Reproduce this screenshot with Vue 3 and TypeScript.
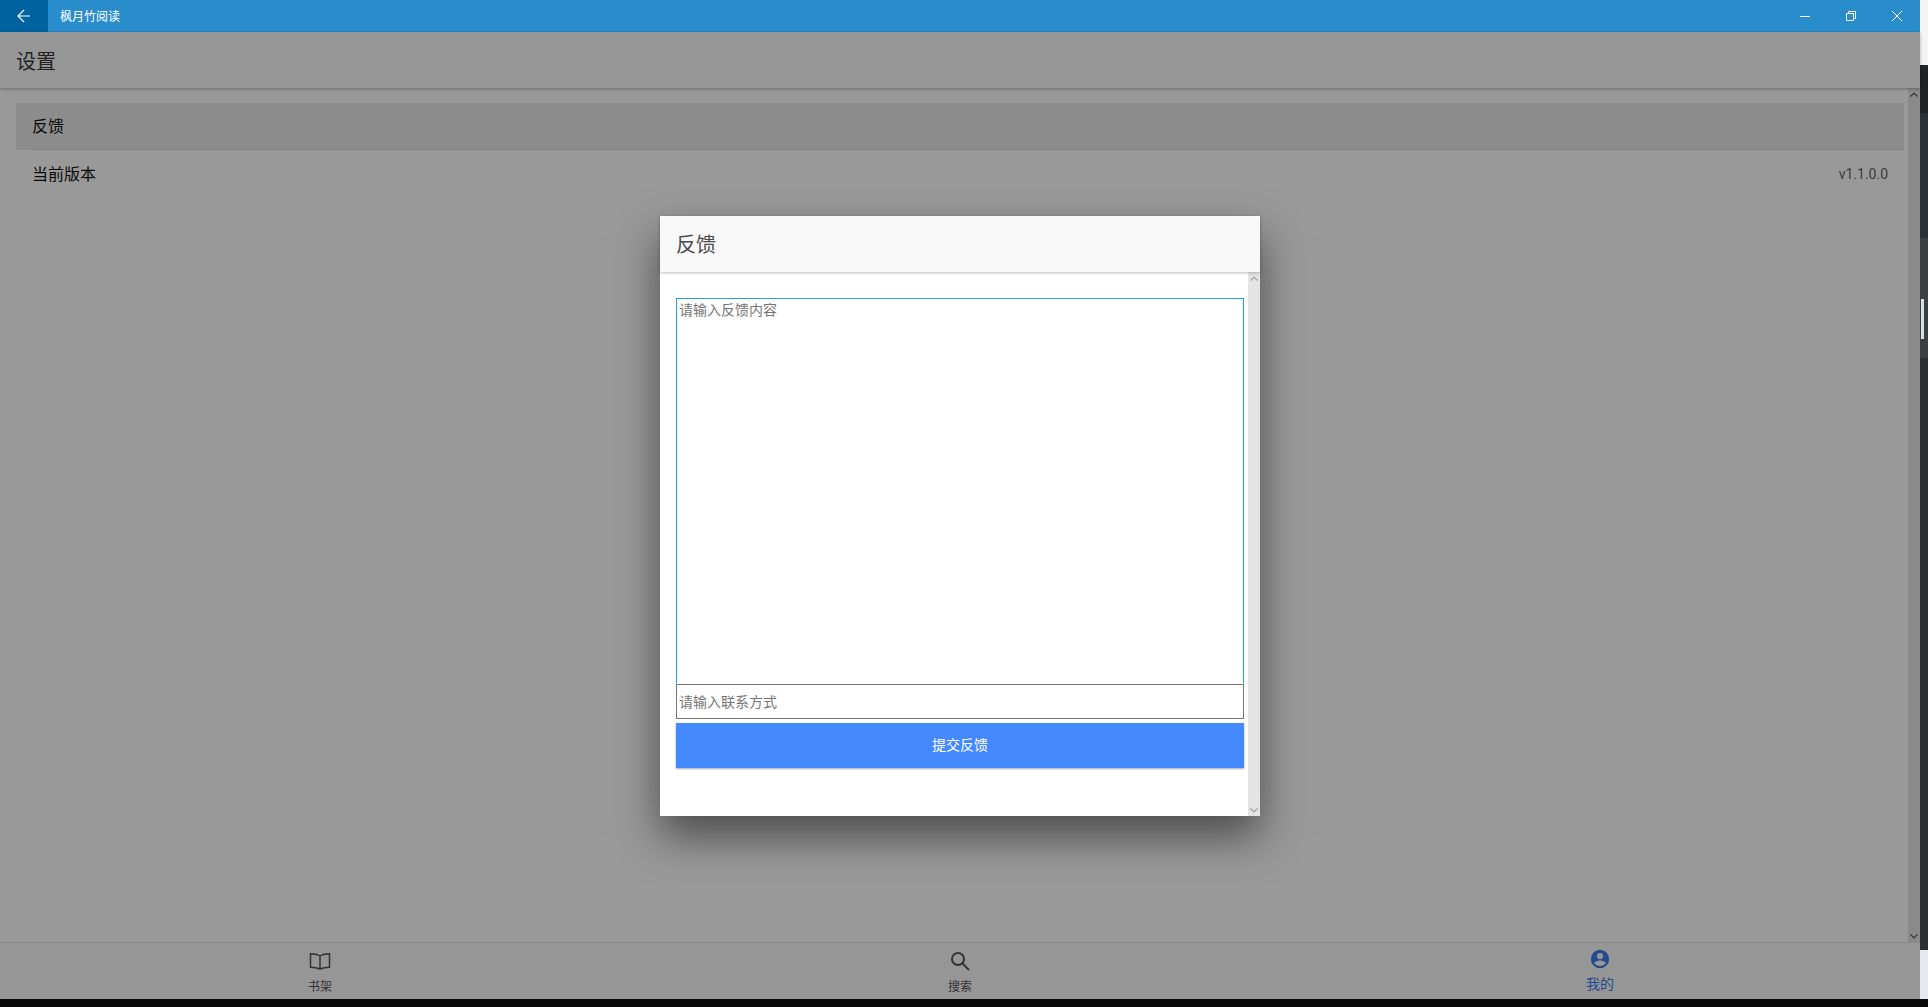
<script setup lang="ts">
interface Tab { label: string; active?: boolean; icon: string }
const tabs: Tab[] = [
  { label: '书架', icon: 'book' },
  { label: '搜索', icon: 'search' },
  { label: '我的', icon: 'user', active: true },
]
</script>

<template>
  <div class="screen">
    <div class="main">
      <div class="window">
        <header class="titlebar">
          <button class="back" aria-label="back">
            <svg width="16" height="16" viewBox="0 0 16 16" fill="none" stroke="#fff" stroke-width="1.2">
              <path d="M14 8H2.2M8 2L2 8l6 6" />
            </svg>
          </button>
          <span class="app-name">枫月竹阅读</span>
          <div class="controls">
            <span class="ctl">
              <svg width="10" height="10" viewBox="0 0 10 10" fill="none" stroke="#fff"><path d="M0 5.500h10" /></svg>
            </span>
            <span class="ctl">
              <svg width="10" height="10" viewBox="0 0 10 10" fill="none" stroke="#fff"><path d="M.5 2.500h7v7h-7zM2.500 2.500v-2h7v7h-2" /></svg>
            </span>
            <span class="ctl">
              <svg width="10" height="10" viewBox="0 0 10 10" fill="none" stroke="#fff"><path d="M0 0l10 10M10 0L0 10" /></svg>
            </span>
          </div>
        </header>

        <div class="content">
          <div class="page-head">设置</div>
          <div class="middle">
            <div class="list">
              <div class="row selected"><span class="row-in">反馈</span></div>
              <div class="row"><span>当前版本</span><span class="version">v1.1.0.0</span></div>
            </div>
            <div class="scroll">
              <svg width="8" height="5" viewBox="0 0 8 5" fill="none" stroke="#555" stroke-width="1.2"><path d="M.5 4.500L4 1l3.500 3.500" /></svg>
              <svg width="8" height="5" viewBox="0 0 8 5" fill="none" stroke="#555" stroke-width="1.2"><path d="M.5.5L4 4 7.500.5" /></svg>
            </div>
          </div>
          <nav class="tabs">
            <div v-for="t in tabs" :key="t.label" class="tab" :class="{ active: t.active }">
              <svg v-if="t.icon === 'book'" width="22" height="22" viewBox="0 0 22 22" fill="none" stroke="currentColor" stroke-width="1.500">
                <path d="M11 6C9 4.600 5 4 1.500 3.800v13.400c3.500.2 7.500.8 9.500 2 2-1.200 6-1.800 9.500-2V3.800C17 4 13 4.600 11 6zM11 6v13" />
              </svg>
              <svg v-else-if="t.icon === 'search'" width="22" height="22" viewBox="0 0 22 22" fill="none" stroke="currentColor" stroke-width="2">
                <circle cx="9" cy="9" r="6" /><path d="M13.500 13.500l6.500 6.500" />
              </svg>
              <svg v-else width="22" height="22" viewBox="0 0 24 24" fill="currentColor">
                <path d="M12 2a10 10 0 100 20 10 10 0 000-20zm0 3.400a3.400 3.400 0 110 6.800 3.400 3.400 0 010-6.800zm0 14.400a7.800 7.800 0 01-6.300-3.200c.1-2 4.200-3.100 6.300-3.100s6.200 1.100 6.300 3.100a7.800 7.800 0 01-6.300 3.200z" />
              </svg>
              <span class="tab-label">{{ t.label }}</span>
            </div>
          </nav>

          <div class="overlay">
            <section class="dialog">
              <h2 class="dialog-head">反馈</h2>
              <div class="dialog-body">
                <div class="form">
                  <textarea class="area" placeholder="请输入反馈内容"></textarea>
                  <input class="contact" placeholder="请输入联系方式" />
                  <button class="submit">提交反馈</button>
                </div>
                <div class="dialog-scroll">
                  <svg width="8" height="5" viewBox="0 0 8 5" fill="none" stroke="#a0a0a0" stroke-width="1.2"><path d="M.5 4.500L4 1l3.500 3.500" /></svg>
                  <svg width="8" height="5" viewBox="0 0 8 5" fill="none" stroke="#a0a0a0" stroke-width="1.2"><path d="M.5.5L4 4 7.500.5" /></svg>
                </div>
              </div>
            </section>
          </div>
        </div>
      </div>
      <aside class="desktop">
        <div class="d-top"></div>
        <div class="d-dark1"></div>
        <div class="d-dark2"></div>
        <div class="d-dark3"><i class="d-thumb"></i></div>
        <div class="d-dark4"></div>
        <div class="d-light"></div>
      </aside>
    </div>
    <div class="bottom"></div>
  </div>
</template>

<style>
html, body { margin: 0; overflow: hidden; background: #0a0a0a; }
</style>

<style scoped>
.screen {
  width: 1928px;
  height: 1007px;
  display: flex;
  flex-direction: column;
  background: #0a0a0a;
  font-family: Roboto, "Noto Sans CJK SC", sans-serif;
  overflow: hidden;
}
.main { display: flex; height: 999px; }
.window { width: 1920px; display: flex; flex-direction: column; background: #fff; }
.bottom { height: 8px; background: #0a0a0a; }

.titlebar { height: 32px; flex: none; display: flex; align-items: center; background: #298dcc; color: #fff; }
.back {
  width: 48px; height: 32px; border: 0; padding: 0;
  background: #00629e;
  display: flex; align-items: center; justify-content: center;
}
.app-name { margin: 0 0 2px 12px; font-size: 12px; }
.controls { margin-left: auto; display: flex; }
.ctl { width: 46px; height: 32px; display: flex; align-items: center; justify-content: center; }

.content { position: relative; flex: 1; display: flex; flex-direction: column; min-height: 0; }
.page-head {
  height: 56px; flex: none; box-sizing: border-box; padding: 0 16px;
  display: flex; align-items: center; font-size: 20px; color: #383838;
  box-shadow: 0 1px 3px rgba(0, 0, 0, .3);
  background: #fafafa;
  position: relative;
}
.middle { flex: 1; display: flex; min-height: 0; }
.list { flex: 1; padding: 15px 4px 0 16px; }
.row {
  height: 47px; box-sizing: border-box; padding: 0 16px 2px;
  display: flex; align-items: center; justify-content: space-between;
  font-size: 16px; color: #111;
}
.row.selected { background: #ebebeb; padding: 0; height: 47px; }
.row-in {
  margin-left: 16px; flex: 1; height: 47px; box-sizing: border-box; padding-bottom: 2px;
  display: flex; align-items: center;
  border-bottom: 1px solid #d4d4d4;
}
.version { font-size: 14px; color: #666; margin-top: 2px; }
.scroll {
  width: 12px; background: #e6e6e6;
  display: flex; flex-direction: column; justify-content: space-between; align-items: center;
  padding: 4px 0 3px; box-sizing: border-box;
}
.tabs {
  height: 57px; flex: none; display: flex;
  border-top: 1px solid #e4e4e4; box-sizing: border-box;
  background: #fafafa;
}
.tab {
  flex: 1; display: flex; flex-direction: column; align-items: center; justify-content: flex-start;
  padding-top: 7px;
  color: #555; font-size: 12px;
}
.tab-label { line-height: 16px; margin-top: 7px; }
.tab.active { color: #3b7df0; }
.tab.active svg { margin-top: -2px; }
.tab.active .tab-label { font-size: 14px; line-height: 18px; margin-top: 5px; }

.overlay {
  position: absolute; inset: 0;
  background: rgba(0, 0, 0, .4);
  display: flex; align-items: center; justify-content: center;
}
.dialog {
  width: 600px; height: 600px; background: #fff;
  display: flex; flex-direction: column;
  box-shadow: 0 20px 40px rgba(0, 0, 0, .5);
}
.dialog-head {
  margin: 0; height: 56px; flex: none; box-sizing: border-box;
  padding: 0 16px; display: flex; align-items: center;
  background: #f8f8f8; font-size: 20px; font-weight: 400; color: #4a4a4a;
  box-shadow: 0 1px 3px rgba(0, 0, 0, .25);
  position: relative;
}
.dialog-body { flex: 1; display: flex; min-height: 0; }
.form { flex: 1; padding: 26px 4px 0 16px; display: flex; flex-direction: column; }
.area, .contact {
  display: block; box-sizing: border-box; width: 100%; margin: 0;
  font: 14px Roboto, "Noto Sans CJK SC", sans-serif; color: #333;
  padding: 0 2px; background: #fff; outline: none; border-radius: 0;
}
.area { height: 386px; border: 1px solid #1fa4e6; border-bottom-color: #fff; resize: none; }
.contact { height: 35px; border: 1px solid #767676; padding-top: 2px; }
.area::placeholder, .contact::placeholder { color: #757575; }
.submit {
  margin-top: 4px; height: 45px; border: 0; padding: 0 0 3px; background: #4589ff; color: #fff;
  font: 14px Roboto, "Noto Sans CJK SC", sans-serif;
  box-shadow: 0 1px 2px rgba(0, 0, 0, .35);
}
.dialog-scroll {
  width: 12px; background: #e4e4e4;
  display: flex; flex-direction: column; justify-content: space-between; align-items: center;
  padding: 4px 0 3px; box-sizing: border-box;
}

.desktop { width: 8px; display: flex; flex-direction: column; background: #23292b; }
.d-top { height: 65px; background: #f4f4f4; }
.d-dark1 { height: 48px; background: #1f2325; }
.d-dark2 { height: 125px; background: #2a3033; }
.d-dark3 { height: 120px; background: #3c3f40; padding-top: 61px; box-sizing: border-box; }
.d-thumb { display: block; width: 3px; height: 40px; margin-left: 1px; background: #d5dfe4; }
.d-dark4 { height: 592px; background: #2b2f31; }
.d-light { flex: 1; background: #e6e8ef; }
</style>
